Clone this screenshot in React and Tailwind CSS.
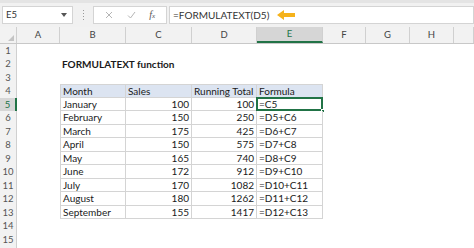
import React from "react";

const cols = ["A", "B", "C", "D", "E", "F", "G", "H", ""];

const data = [
  ["January", 100, 100, "=C5"],
  ["February", 150, 250, "=D5+C6"],
  ["March", 175, 425, "=D6+C7"],
  ["April", 150, 575, "=D7+C8"],
  ["May", 165, 740, "=D8+C9"],
  ["June", 172, 912, "=D9+C10"],
  ["July", 170, 1082, "=D10+C11"],
  ["August", 180, 1262, "=D11+C12"],
  ["September", 155, 1417, "=D12+C13"],
];

const grid = "grid grid-cols-[17px_43px_66px_66px_65px_66px_43px_44px_44px_1fr]";

function RowHead({ n }) {
  const active = n === 5;
  return (
    <div
      className={
        "h-[13.5px] flex items-center justify-center text-[9.5px] leading-none border-r " +
        (active
          ? "bg-[#d6d6d6] text-[#217346] border-r-2 border-[#217346]"
          : "bg-[#f2f2f2] text-[#555] border-[#d0d0d0]")
      }
    >
      {n}
    </div>
  );
}

function Blank() {
  return <div className="h-[13.5px]" />;
}

function Cell({ children, right, head, left, top, className = "" }) {
  return (
    <div
      className={
        "h-[13.5px] flex items-center px-[2px] text-[10px] leading-none text-[#1a1a1a] whitespace-nowrap overflow-visible border-r border-b border-[#d4d4d4] " +
        (right ? "justify-end " : "") +
        (head ? "bg-[#dce4f1] " : "") +
        (left ? "border-l " : "") +
        (top ? "border-t " : "") +
        className
      }
    >
      {children}
    </div>
  );
}

export default function App() {
  const rows = [];
  for (let r = 1; r <= 15; r++) {
    const cells = [<RowHead key="h" n={r} />];
    if (r === 2) {
      cells.push(<Blank key="a" />);
      cells.push(
        <div key="b" className="h-[13.5px] flex items-center px-[2px] text-[10px] font-bold leading-none text-[#1a1a1a] whitespace-nowrap">
          FORMULATEXT function
        </div>
      );
      for (let i = 0; i < 7; i++) cells.push(<Blank key={"x" + i} />);
    } else if (r === 4) {
      cells.push(<Blank key="a" />);
      cells.push(<Cell key="b" head left top>Month</Cell>);
      cells.push(<Cell key="c" head top>Sales</Cell>);
      cells.push(<Cell key="d" head top>Running Total</Cell>);
      cells.push(<Cell key="e" head top>Formula</Cell>);
      for (let i = 0; i < 4; i++) cells.push(<Blank key={"x" + i} />);
    } else if (r >= 5 && r <= 13) {
      const d = data[r - 5];
      cells.push(<Blank key="a" />);
      cells.push(<Cell key="b" left>{d[0]}</Cell>);
      cells.push(<Cell key="c" right>{d[1]}</Cell>);
      cells.push(<Cell key="d" right>{d[2]}</Cell>);
      cells.push(
        <div key="e" className="relative">
          <Cell>{d[3]}</Cell>
          {r === 5 && (
            <>
              <div className="absolute -left-[1px] -top-[1px] right-0 bottom-0 border-2 border-[#217346]" />
              <div className="absolute -right-[2px] -bottom-[2px] w-[4px] h-[4px] bg-[#217346] border border-white" />
            </>
          )}
        </div>
      );
      for (let i = 0; i < 4; i++) cells.push(<Blank key={"x" + i} />);
    } else {
      for (let i = 0; i < 9; i++) cells.push(<Blank key={"x" + i} />);
    }
    rows.push(cells);
  }

  return (
    <div className="w-[474px] h-[248px] overflow-hidden bg-white font-['Lato','Liberation_Sans',sans-serif]">
      {/* formula bar */}
      <div className="h-[27px] bg-[#f1f1f1] border-t-[3px] border-[#e4e4e4] flex items-start pt-[3px]">
        <div className="ml-[2px] w-[71px] h-[18px] bg-white border border-[#d4d4d4] flex items-center justify-between px-[3px]">
          <span className="text-[9.5px] text-[#333]">E5</span>
          <svg width="6" height="4" viewBox="0 0 6 4" className="mr-[2px]">
            <path d="M0 0h6L3 4z" fill="#555" />
          </svg>
        </div>
        <div className="w-[20px] h-[18px] flex flex-col items-center justify-center gap-[2px]">
          <span className="w-[1px] h-[1px] bg-[#999]" />
          <span className="w-[1px] h-[1px] bg-[#999]" />
          <span className="w-[1px] h-[1px] bg-[#999]" />
          <span className="w-[1px] h-[1px] bg-[#999]" />
        </div>
        <div className="w-[74px] h-[18px] bg-white border border-[#d4d4d4] flex items-center justify-around px-[4px]">
          <svg width="8" height="8" viewBox="0 0 8 8">
            <path d="M1 1L7 7M7 1L1 7" stroke="#b5b5b5" strokeWidth="1" />
          </svg>
          <svg width="9" height="8" viewBox="0 0 9 8">
            <path d="M1 4.5L3.5 7L8 1" stroke="#b5b5b5" strokeWidth="1" fill="none" />
          </svg>
          <span className="font-['Liberation_Serif',serif] italic text-[10px] text-[#555] leading-none">
            f<span className="text-[7px]">x</span>
          </span>
        </div>
        <div className="ml-[2px] flex-1 h-[18px] bg-white border border-[#d4d4d4] flex items-center pl-[3px]">
          <span className="text-[10px] text-[#333]">=FORMULATEXT(D5)</span>
          <svg width="18" height="10" viewBox="0 0 18 10" className="ml-[8px]">
            <path d="M0 5L7 0V3H18V7H7V10Z" fill="#f5b21b" />
          </svg>
        </div>
      </div>

      {/* column headers */}
      <div className={grid + " h-[16.5px] bg-[#f2f2f2] border-b border-[#c8c8c8]"}>
        <div className="relative border-r border-[#d0d0d0]">
          <svg width="6" height="6" viewBox="0 0 6 6" className="absolute right-[2px] bottom-[2px]">
            <path d="M6 0V6H0Z" fill="#c4c4c4" />
          </svg>
        </div>
        {cols.map((c, i) => (
          <div
            key={i}
            className={
              "flex items-center justify-center text-[9.5px] " +
              (c === "E"
                ? "bg-[#d6d6d6] text-[#217346] border-b-2 border-[#217346] border-r border-r-[#d0d0d0]"
                : "text-[#444] border-r border-[#d0d0d0]")
            }
          >
            {c}
          </div>
        ))}
      </div>

      {/* sheet */}
      <div className={grid}>{rows}</div>
      <div className="w-[17px] h-[10px] bg-[#f2f2f2] border-r border-[#d0d0d0]" />
    </div>
  );
}
